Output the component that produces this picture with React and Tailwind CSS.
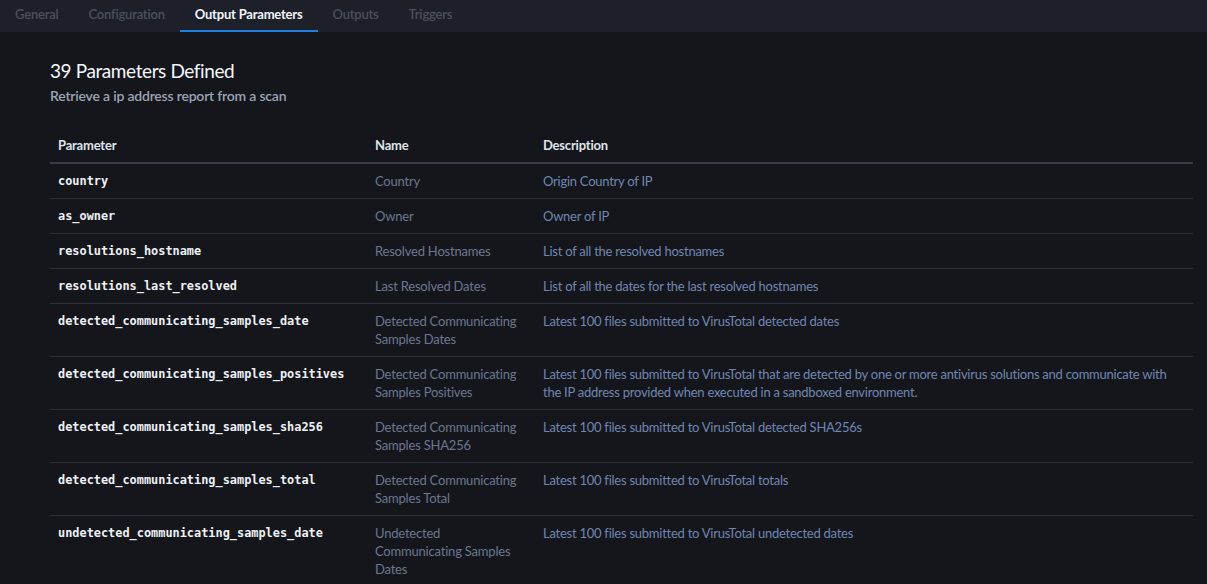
const tabs = ['General', 'Configuration', 'Output Parameters', 'Outputs', 'Triggers']

const params = [
  { key: 'country', name: 'Country', desc: 'Origin Country of IP' },
  { key: 'as_owner', name: 'Owner', desc: 'Owner of IP' },
  { key: 'resolutions_hostname', name: 'Resolved Hostnames', desc: 'List of all the resolved hostnames' },
  { key: 'resolutions_last_resolved', name: 'Last Resolved Dates', desc: 'List of all the dates for the last resolved hostnames' },
  { key: 'detected_communicating_samples_date', name: 'Detected Communicating Samples Dates', desc: 'Latest 100 files submitted to VirusTotal detected dates' },
  {
    key: 'detected_communicating_samples_positives',
    name: 'Detected Communicating Samples Positives',
    desc: 'Latest 100 files submitted to VirusTotal that are detected by one or more antivirus solutions and communicate with the IP address provided when executed in a sandboxed environment.',
  },
  { key: 'detected_communicating_samples_sha256', name: 'Detected Communicating Samples SHA256', desc: 'Latest 100 files submitted to VirusTotal detected SHA256s' },
  { key: 'detected_communicating_samples_total', name: 'Detected Communicating Samples Total', desc: 'Latest 100 files submitted to VirusTotal totals' },
  { key: 'undetected_communicating_samples_date', name: 'Undetected Communicating Samples Dates', desc: 'Latest 100 files submitted to VirusTotal undetected dates' },
]

export default function App() {
  return (
    <div className="min-h-screen bg-[#15161b] font-['Lato',sans-serif] text-[13px] tracking-[-0.2px]">
      {/* tabs */}
      <div className="flex h-8 bg-[#1d2029]">
        {tabs.map((t) => {
          const active = t === 'Output Parameters'
          return (
            <div
              key={t}
              className={
                active
                  ? 'flex items-center px-[15px] border-b-2 border-[#1e7fe0] font-bold text-[#f2f4f8]'
                  : 'flex items-center px-[15px] border-b-2 border-transparent font-semibold text-[#4a505c]'
              }
            >
              {t}
            </div>
          )
        })}
      </div>

      <div className="pl-[50px] pr-[14px] pt-[27px]">
        <h1 className="text-[19px] leading-[24px] tracking-[-0.4px] text-[#f4f6fa]">39 Parameters Defined</h1>
        <p className="mt-[2px] text-[14px] font-semibold text-[#9ba4b6]">Retrieve a ip address report from a scan</p>

        <table className="mt-[22px] w-full border-collapse text-left">
          <thead>
            <tr className="border-b-2 border-[#373a47]">
              <th className="w-[317px] px-2 py-2 leading-[18px] font-bold text-[#dfe3ea]">Parameter</th>
              <th className="w-[168px] px-2 py-2 leading-[18px] font-bold text-[#dfe3ea]">Name</th>
              <th className="px-2 py-2 leading-[18px] font-bold text-[#dfe3ea]">Description</th>
            </tr>
          </thead>
          <tbody>
            {params.map((p) => (
              <tr key={p.key} className="border-b border-[#2c2f3a] align-top">
                <td className="px-2 py-2 leading-[18px] font-['DejaVu_Sans_Mono',monospace] text-[11.9px] tracking-normal font-semibold text-[#eef1f6]">{p.key}</td>
                <td className="px-2 py-2 leading-[18px] text-[#6b7792]">{p.name}</td>
                <td className="pl-2 pr-6 py-2 leading-[18px] tracking-[-0.25px] text-[#6f86b2]">{p.desc}</td>
              </tr>
            ))}
          </tbody>
        </table>
      </div>
    </div>
  )
}
